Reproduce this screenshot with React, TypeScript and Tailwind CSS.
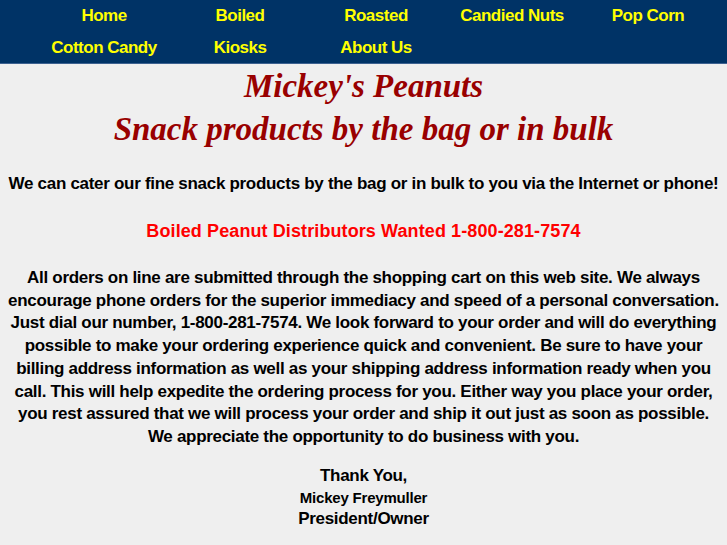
import React from "react"

const navRows = [
  ["Home", "Boiled", "Roasted", "Candied Nuts", "Pop Corn"],
  ["Cotton Candy", "Kiosks", "About Us", "", ""],
]

const bodyLines = [
  "All orders on line are submitted through the shopping cart on this web site. We always",
  "encourage phone orders for the superior immediacy and speed of a personal conversation.",
  "Just dial our number, 1-800-281-7574. We look forward to your order and will do everything",
  "possible to make your ordering experience quick and convenient. Be sure to have your",
  "billing address information as well as your shipping address information ready when you",
  "call. This will help expedite the ordering process for you. Either way you place your order,",
  "you rest assured that we will process your order and ship it out just as soon as possible.",
  "We appreciate the opportunity to do business with you.",
]

export default function App() {
  return (
    <div className="min-h-[545px] bg-[#efefef] font-['Liberation_Sans',Arial,sans-serif] text-black">
      <div className="h-[64px] bg-[#003366] border-b border-[#3d6190]">
        <div className="ml-[36px] w-[680px] grid grid-cols-5">
          {navRows.flat().map((item, i) => (
            <div key={i} className="h-[32px] flex items-center justify-center text-[17px] font-bold text-[#ffff00] tracking-[-0.5px]">
              {item}
            </div>
          ))}
        </div>
      </div>

      <div className="pt-[1px] text-center font-['Liberation_Serif','Times_New_Roman',serif] italic font-bold text-[#990000] text-[33px] leading-[43px]">
        <div>Mickey's Peanuts</div>
        <div>Snack products by the bag or in bulk</div>
      </div>

      <div className="text-center font-bold">
        <p className="mt-[22px] text-[17px] leading-[22px] tracking-[-0.3px]">
          We can cater our fine snack products by the bag or in bulk to you via the Internet or phone!
        </p>
        <p className="mt-[24px] text-[18px] leading-[24px] text-[#ff0000] tracking-[0.1px]">
          Boiled Peanut Distributors Wanted 1-800-281-7574
        </p>
        <p className="mt-[24px] text-[17px] leading-[22.7px] tracking-[-0.3px]">
          {bodyLines.map((line, i) => (
            <span key={i} className="block whitespace-nowrap">{line}</span>
          ))}
        </p>
        <div className="mt-[16px]">
          <div className="text-[17px] leading-[22px] tracking-[-0.3px]">Thank You,</div>
          <div className="text-[15px] leading-[21px] tracking-[-0.2px]">Mickey Freymuller</div>
          <div className="text-[17px] leading-[22px] tracking-[-0.3px]">President/Owner</div>
        </div>
      </div>
    </div>
  )
}
